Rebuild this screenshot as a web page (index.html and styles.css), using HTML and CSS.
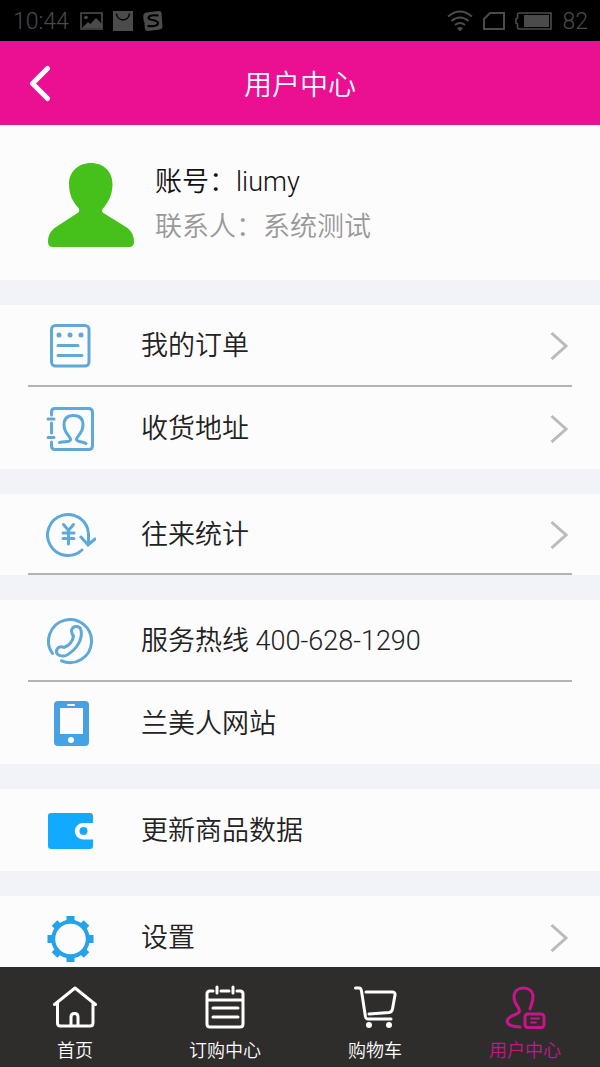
FILE: index.html
```
<!DOCTYPE html>
<html lang="zh-CN">
<head>
  <meta charset="UTF-8" />
  <meta name="viewport" content="width=device-width, initial-scale=1" />
  <title>用户中心</title>
  <link rel="stylesheet" href="styles.css">
</head>
<body>
  <div class="status">
    <span>10:44</span>
    <svg width="24" height="20" viewBox="0 0 24 20">
      <rect x="2" y="2" width="21" height="16" fill="none" stroke="#4b4b4b" stroke-width="1.6"/>
      <circle cx="7" cy="6.5" r="1.8" fill="#4b4b4b"/>
      <path d="M3 17L9 11L11.5 13L17 7L23 13V17Z" fill="#4b4b4b"/>
    </svg>
    <svg width="20" height="20" viewBox="0 0 20 20">
      <path d="M0 0H20V20H0Z" fill="#4b4b4b"/>
      <path d="M3.5 2.5C4 11 16 11 16.5 2.5" fill="none" stroke="#000" stroke-width="1.5"/>
    </svg>
    <svg width="20" height="20" viewBox="0 0 20 20">
      <path d="M3 1.5L16 0Q18.5 0 18.5 2.5L19.5 15Q19.5 18 17 18.5L5 20Q2 20 1.8 17L1.5 12Q0 9 0.3 4.5Q0.5 2 3 1.5Z" fill="#4b4b4b"/>
      <path d="M15.5 4.5Q6 3.5 5.5 6.8C5.3 9.5 15 8.5 15 12C15 15.500 8 15.5 4.5 14.8" fill="none" stroke="#000" stroke-width="2.2"/>
    </svg>
    <div class="status-right">
      <svg width="26" height="22" viewBox="0 0 26 22" fill="none" stroke="#4b4b4b" stroke-width="2">
        <path d="M1 6.5Q13 -3.5 25 6.5M4.5 11Q13 4 21.5 11M8 15Q13 11 18 15"/>
        <path d="M10 18Q13 16 16 18L13 21.5Z" fill="#4b4b4b" stroke="none"/>
      </svg>
      <svg width="22" height="18" viewBox="0 0 22 18" fill="none" stroke="#4b4b4b" stroke-width="2">
        <path d="M1 17V7L7 1H21V17Z"/>
      </svg>
      <svg width="37" height="18" viewBox="0 0 37 18">
        <path d="M4 1H36V17H4Q2.5 17 2.5 15V12L1 11V7L2.5 6V3Q2.5 1 4 1Z" fill="none" stroke="#4b4b4b" stroke-width="1.6"/>
        <rect x="9" y="3" width="25" height="12" fill="#4b4b4b"/>
      </svg>
      <span>82</span>
    </div>
  </div>

  <header class="header">
    <button class="back" aria-label="返回">
      <svg width="22" height="38" viewBox="0 0 22 38">
        <path d="M18.5 4.500L3.500 19.500L18.5 34.500" fill="none" stroke="#fff" stroke-width="5" stroke-linecap="round" stroke-linejoin="round"/>
      </svg>
    </button>
    <h1>用户中心</h1>
  </header>

  <main class="content">
    <section class="profile">
      <svg width="86" height="86" viewBox="0 0 86 86" fill="#46c01b">
        <path d="M43 1C56 1 64.5 10 64.5 22C64.5 33 60 41 54.500 47C53.500 50 55 51 57 52L78 65C84 69 86 74 86 80Q86 85 81 85H5Q0 85 0 80C0 74 2 69 8 65L28 52C31 50.500 32 49 30.500 46C25 40 21 33 21 22C21 10 30 1 43 1Z"/>
      </svg>
      <div>
        <p class="account">账号：liumy</p>
        <p class="contact">联系人：系统测试</p>
      </div>
    </section>

    <section class="group">
      <a class="row" href="#">
        <svg class="icon" viewBox="0 0 50 50">
          <rect x="5.500" y="5.500" width="37.500" height="40.500" rx="4"/>
          <path d="M12 25.500H32M12 35.500H36"/>
          <g class="solid"><circle cx="13" cy="15" r="2.500"/><circle cx="24" cy="15" r="2.500"/><circle cx="35" cy="15" r="2.500"/></g>
        </svg>
        <span>我的订单</span>
        <svg class="arrow" viewBox="0 0 18 30"><path d="M1.500 3L16 16L1.500 29"/></svg>
      </a>
      <a class="row" href="#">
        <svg class="icon" viewBox="0 0 50 50">
          <path d="M5.500 12V9Q5.500 5.500 9 5.500H42.500Q46.500 5.500 46.500 9.500V42.500Q46.500 46.500 42.500 46.500H9Q5.500 46.500 5.500 43V39M5.500 20V30M2 16H8M2 34.500H8"/>
          <path d="M13.500 39.500C19 38 25 39.500 24.500 36C24 33 18 30 18 22C18 15 22 12.500 27.500 12.500C33 12.500 37 15 37 22C37 30 31 33 30.500 36C30 39.500 36 38 40 40.500"/>
        </svg>
        <span>收货地址</span>
        <svg class="arrow" viewBox="0 0 18 30"><path d="M1.500 3L16 16L1.500 29"/></svg>
      </a>
    </section>

    <section class="group">
      <a class="row underline" href="#">
        <svg class="icon" viewBox="0 0 50 50">
          <path d="M36 41A20.500 20.500 0 1 1 42.500 24.500L42.500 34M35 28L42 36L49 30"/>
          <path d="M17.500 15.500L22.500 21.500L27.500 15.500M22.500 22V35M17 24H28M17 29.500H28"/>
        </svg>
        <span>往来统计</span>
        <svg class="arrow" viewBox="0 0 18 30"><path d="M1.500 3L16 16L1.500 29"/></svg>
      </a>
    </section>

    <section class="group">
      <a class="row" href="tel:400-628-1290">
        <svg class="icon" viewBox="0 0 50 50">
          <path d="M6.500 38.500A21.500 21.500 0 1 1 15.500 45.800"/>
          <path d="M26 14C28 10 34 11 35 15C37 24 31 34 21 40C17 42 10 41 10.500 36C11 32 15 31 18 32.500C23 31 27 26 27.500 21C26 19 25 16 26 14Z"/>
        </svg>
        <span>服务热线 400-628-1290</span>
      </a>
      <a class="row" href="#">
        <svg class="icon" viewBox="0 0 50 50">
          <g stroke="none">
            <rect x="8" y="3" width="35" height="45" rx="4" fill="#47a2e4"/>
            <rect x="14" y="10" width="23" height="26" fill="#fcfcfc"/>
            <rect x="21" y="6" width="8" height="2" rx="1" fill="#fcfcfc"/>
            <circle cx="25" cy="42" r="3" fill="#fcfcfc"/>
          </g>
        </svg>
        <span>兰美人网站</span>
      </a>
    </section>

    <section class="group">
      <a class="row" href="#">
        <svg class="icon" viewBox="0 0 50 50">
          <g stroke="none">
            <path d="M5 8H44Q47 8 47 11V18H37A8 8 0 0 0 37 34.500H47V41Q47 44 44 44H5Q2 44 2 41V11Q2 8 5 8Z" fill="#12aaff"/>
            <circle cx="37.500" cy="26" r="4" fill="#12aaff"/>
          </g>
        </svg>
        <span>更新商品数据</span>
      </a>
    </section>

    <section class="group">
      <a class="row" href="#">
        <svg class="icon gear" viewBox="0 0 50 50">
          <circle cx="24.500" cy="27" r="17.300"/>
          <path stroke-width="8" d="M24.500 4V10M24.500 44V50M1.500 27H7.500M41.500 27H47.500M8.500 11L12.500 15M36.500 39L40.500 43M8.500 43L12.500 39M36.500 15L40.500 11"/>
        </svg>
        <span>设置</span>
        <svg class="arrow" viewBox="0 0 18 30"><path d="M1.500 3L16 16L1.500 29"/></svg>
      </a>
    </section>
  </main>

  <nav class="tabs">
    <a href="#">
      <svg viewBox="0 0 46 46">
        <path d="M2.500 20.500L23 4L43.500 20.500M5.500 19V39Q5.500 42 8.500 42H38Q41 42 41 39V19M19 41V33Q19 29.500 22.500 29.500Q26 29.500 26 33V41"/>
      </svg>
      首页
    </a>
    <a href="#">
      <svg viewBox="0 0 46 46">
        <path d="M11 7H8Q5 7 5 10V40Q5 43 8 43H38Q41 43 41 40V10Q41 7 38 7H35M19 7H27M15 3V9M31 3V9M5 16H41M11 24H36M11 33H36"/>
      </svg>
      订购中心
    </a>
    <a href="#">
      <svg viewBox="0 0 46 46">
        <path d="M3.500 4H7Q9 4 9.500 7L13.500 33Q14 35 16 35H39M14 8H40Q43.500 8 43 11L40.500 25Q40 28 37 28.500L17 30"/>
        <circle cx="17" cy="41" r="3" fill="#fff" stroke="none"/>
        <circle cx="37" cy="41" r="3" fill="#fff" stroke="none"/>
      </svg>
      购物车
    </a>
    <a class="active" href="#">
      <svg viewBox="0 0 46 46">
        <path d="M18 43C11 43 4 41 5.500 36C7 31 17 31 17.500 27C18 23 12 21 12 13C12 7 16 4 21.500 4C27 4 31 7 31 13C31 18 29 21 28 25"/>
        <rect x="23" y="30" width="19" height="13.500" rx="3"/>
        <path stroke-width="2" d="M29 34.500H37M29 38.500H34"/>
      </svg>
      用户中心
    </a>
  </nav>
</body>
</html>
```
FILE: styles.css
```
* {
  box-sizing: border-box;
}
body {
  margin: 0;
  height: 100vh;
  display: flex;
  flex-direction: column;
  background: #f2f3f8;
  color: #222;
  font-family: Roboto, 'Noto Sans CJK SC', sans-serif;
  font-weight: 350;
}
h1, p {
  margin: 0;
  font-weight: 350;
}
a {
  color: inherit;
  text-decoration: none;
}
svg {
  flex: none;
}
.status {
  height: 41px;
  flex: none;
  display: flex;
  align-items: center;
  gap: 10px;
  padding: 1px 12px 0 13px;
  background: #000;
  color: #4b4b4b;
  font-size: 23px;
  font-weight: 300;
}
.status-right {
  display: flex;
  align-items: center;
  gap: 10px;
  margin-left: auto;
}
.header {
  height: 84px;
  flex: none;
  display: grid;
  grid-template-columns: 80px 1fr 80px;
  align-items: center;
  background: #ea1091;
  color: #fff;
}
.header h1 {
  font-size: 28px;
  text-align: center;
}
.back {
  display: flex;
  justify-content: center;
  padding: 20px 0;
  border: none;
  background: none;
  cursor: pointer;
}
.content {
  flex: 1;
  min-height: 0;
  overflow-y: auto;
  scrollbar-width: none;
}
.profile {
  display: flex;
  align-items: center;
  gap: 21px;
  height: 155px;
  padding: 4px 48px 0;
  background: #fcfcfc;
  font-size: 27px;
  line-height: 45px;
}
.account {
  color: #111;
}
.contact {
  color: #999;
}
.group {
  margin-top: 25px;
  padding: 0 28px;
  background: #fcfcfc;
}
.row {
  display: flex;
  align-items: center;
  height: 82px;
  padding: 0 4px 0 18px;
  font-size: 27px;
}
.row span {
  padding-bottom: 3px;
}
.row:not(:last-child),
.underline {
  border-bottom: 2px solid #b4b4b4;
}
.underline {
  height: 81px;
}
.icon {
  width: 50px;
  height: 50px;
  margin-right: 45px;
  fill: none;
  stroke: #5fa9d8;
  stroke-width: 3;
  stroke-linecap: round;
}
.icon .solid {
  fill: #5fa9d8;
  stroke: none;
}
.gear {
  stroke: #25a2ea;
  stroke-linecap: butt;
  stroke-width: 4;
}
.arrow {
  width: 18px;
  height: 30px;
  margin-left: auto;
  fill: none;
  stroke: #bbb;
  stroke-width: 3;
}
.tabs {
  height: 100px;
  flex: none;
  display: grid;
  grid-template-columns: repeat(4, 1fr);
  background: #2e2d2c;
  color: #fff;
  font-size: 18px;
}
.tabs a {
  display: flex;
  flex-direction: column;
  align-items: center;
  padding-top: 17px;
  line-height: 26px;
  gap: 8px;
}
.tabs svg {
  width: 46px;
  height: 46px;
  fill: none;
  stroke: #fff;
  stroke-width: 3;
  stroke-linecap: round;
  stroke-linejoin: round;
}
.tabs .active {
  color: #c9148a;
}
.tabs .active svg {
  stroke: #c9148a;
}
```
